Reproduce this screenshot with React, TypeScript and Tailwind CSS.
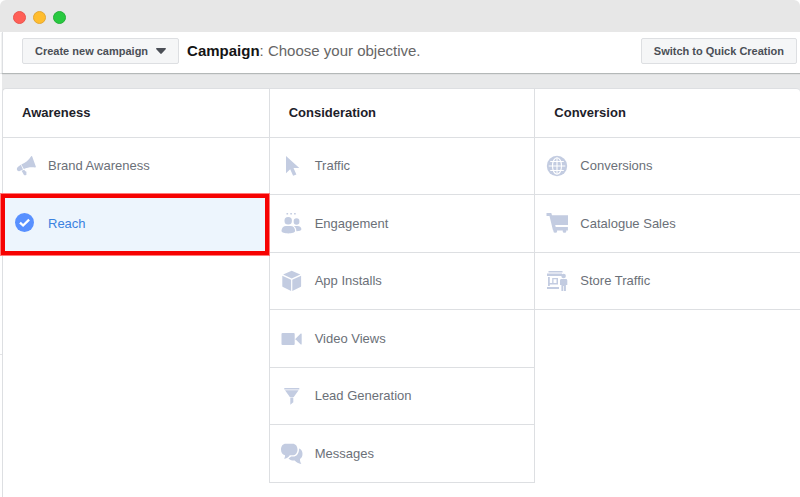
import { useState } from "react";
import type { ReactNode } from "react";

const ICON = "w-[22px] h-[22px] fill-current";

function Megaphone() {
  return (
    <svg viewBox="0 0 22 22" className={ICON}>
      <path d="M17 1.500c.4-.6 1-.5 1.200.1l3.600 9.900c.2.600-.1 1-.8.9-4-.5-7.800 0-11.200 1.600L7.300 9.400C11.600 7.700 14.700 5.200 17 1.500zM6.800 9.700l2.200 4.800-3.300 1.500c-1.200.5-2.200 0-2.600-1-.5-1.200-.1-2.600 1-3.300zM7.600 15.700l2.800-1 .6 1.400 1 .5c.6.3.7.8.3 1.200l.2 1.500c0 .6-.4.9-1 .9h-1c-.4 0-.6-.2-.8-.6z" />
    </svg>
  );
}

function CheckCircle() {
  return (
    <svg viewBox="0 0 22 22" className={ICON}>
      <circle cx="10.500" cy="9.500" r="9.500" />
      <path d="M6 9.600l3.100 2.900 6-5.900" fill="none" stroke="#fff" strokeWidth="2.300" />
    </svg>
  );
}

function Cursor() {
  return (
    <svg viewBox="0 0 22 22" className={ICON}>
      <path d="M5 1v17.300l4.200-4 2.900 6.500 3.300-1.400-2.900-6.300h5.800z" />
    </svg>
  );
}

function People() {
  return (
    <svg viewBox="0 0 22 22" className={ICON}>
      <path d="M5.500 0h1.600v1.400H5.500zM9.300 0h1.600v1.400H9.300zM13.100 0h1.600v1.400h-1.600z" />
      <rect x="3.500" y="4" width="7.400" height="7.600" rx="3.600" />
      <path d="M.5 17.800c0-2.900 2-4.900 4.500-4.900h4.600c2.600 0 4.500 2 4.500 4.900 0 2-3.300 2.600-6.800 2.600S.5 19.800.5 17.800z" />
      <rect x="12.700" y="5.300" width="5.700" height="6.500" rx="2.800" />
      <path d="M12.900 12.900h3.700c2.300 0 3.800 1.500 3.800 3.400 0 1.300-2 2-5 2 0-2.500-.8-4.200-2.500-5.400z" />
    </svg>
  );
}

function Cube() {
  return (
    <svg viewBox="0 0 22 22" className={ICON}>
      <path d="M10.700.8l8.600 3.700-8.600 3.900-8.600-3.900zM1.300 5.700l8.800 4v11.200L2 17c-.5-.2-.7-.6-.7-1.100zM20.100 5.700l-8.800 4v11.200l8.100-3.900c.5-.2.700-.6.700-1.100z" />
    </svg>
  );
}

function Video() {
  return (
    <svg viewBox="0 0 22 22" className={ICON}>
      <rect x=".5" y="5" width="13.200" height="12" rx="1" />
      <path d="M14.500 10.800l5-5.100c.6-.5 1.200-.3 1.200.4v9.800c0 .7-.6.900-1.200.4l-5-5.100z" />
    </svg>
  );
}

function Funnel() {
  return (
    <svg viewBox="0 0 22 22" className={ICON}>
      <path d="M3.300 3h15v1.500h-15zM4 5.300h13.600l-4.800 6.600H8.800z" />
      <path d="M9.300 12.400h3v4.800l-3 2.500z" />
    </svg>
  );
}

function Chat() {
  return (
    <svg viewBox="-.5 0 22 22" className={ICON}>
      <path d="M4.300.8H11c3.100 0 5 2.400 5 5.600 0 3.400-2 5.900-5 5.900H8.300c-1.500 2.100-3.200 3.500-5.700 3.500.8-1.200 1-2.300.9-3.500C.8 11.600-.5 9.600-.5 6.500-.5 3.100 1.300.8 4.300.8z" />
      <path d="M17.600 5.500c2.200.7 3.400 2.600 3.400 5.300 0 2.500-.8 4.300-2.500 5.200-.1 1.900.4 3.500 1.300 5-2.900-.5-5-1.600-6.600-3.500-3 .2-5.100-.7-6.200-2.300 1.100-.4 1.900-.9 2.600-1.600h2c3.400 0 6-2.900 6-8.100z" />
    </svg>
  );
}

function Globe() {
  return (
    <svg viewBox="0 0 22 22" className={ICON}>
      <circle cx="11" cy="11" r="10.200" />
      <g fill="none" stroke="#fff" strokeWidth="1.100">
        <ellipse cx="11" cy="11" rx="4.500" ry="8.300" />
        <path d="M11 2.700v16.600M2.700 11h16.600M4.200 6.500h13.600M4.200 15.500h13.600" />
      </g>
    </svg>
  );
}

function Cart() {
  return (
    <svg viewBox="0 0 22 22" className={ICON}>
      <path d="M.5 0h4.800L6 2.200h16.400v9.900H9.200l.5 1.900h12.200v3.500H7L3.500 3h-3z" />
      <circle cx="9.300" cy="17.900" r="1.900" />
      <circle cx="18.500" cy="17.900" r="1.900" />
    </svg>
  );
}

function Store() {
  return (
    <svg viewBox="0 0 22 22" className={ICON}>
      <path d="M2.500 1h14v1.500h-14zM1 3.500h15v2.500H1z" />
      <path d="M2 7h1.800v9H2zM6.200 8h1.300v5H6.200zM10.500 8H12v5h-1.500zM6.200 8h5v1.200h-5zM2 13h10v1.500H2z" />
      <path d="M1 17h12v2H1z" />
      <circle cx="17.600" cy="6" r="2.300" />
      <path d="M15.500 9h4.300c1 0 1.500.6 1.500 1.500v4.500h-1.400v6H18v-5h-.7v5h-1.900v-6H14v-4.500c0-.9.500-1.500 1.500-1.500z" />
    </svg>
  );
}

type Objective = { name: string; icon: ReactNode };

const COLUMNS: { title: string; items: Objective[] }[] = [
  {
    title: "Awareness",
    items: [
      { name: "Brand Awareness", icon: <Megaphone /> },
      { name: "Reach", icon: <CheckCircle /> },
    ],
  },
  {
    title: "Consideration",
    items: [
      { name: "Traffic", icon: <Cursor /> },
      { name: "Engagement", icon: <People /> },
      { name: "App Installs", icon: <Cube /> },
      { name: "Video Views", icon: <Video /> },
      { name: "Lead Generation", icon: <Funnel /> },
      { name: "Messages", icon: <Chat /> },
    ],
  },
  {
    title: "Conversion",
    items: [
      { name: "Conversions", icon: <Globe /> },
      { name: "Catalogue Sales", icon: <Cart /> },
      { name: "Store Traffic", icon: <Store /> },
    ],
  },
];

export default function App() {
  const [selected, setSelected] = useState("Reach");

  return (
    <div className="min-h-screen flex flex-col bg-white font-['Liberation_Sans',Arial,sans-serif]">
      {/* Window bar */}
      <div className="h-8 shrink-0 flex items-center gap-[7px] px-[13px] pt-[2px] bg-[#e7e7e7] rounded-t-md">
        <span className="w-[13px] h-[13px] rounded-full bg-[#ff5f57] border border-[#e9554e]" />
        <span className="w-[13px] h-[13px] rounded-full bg-[#ffbd2e] border border-[#e3a733]" />
        <span className="w-[13px] h-[13px] rounded-full bg-[#28c940] border border-[#24af38]" />
      </div>

      <div className="flex-1 flex">
        {/* Edge of the side panel */}
        <div className="w-[2px] shrink-0 flex flex-col">
          <div className="h-[42px] border-b border-[#e3e4e6]" />
          <div className="h-[281px] border-b border-[#e3e4e6]" />
        </div>

        <div className="flex-1 min-w-0 flex flex-col bg-[#e8e9ea]">
          <header className="h-[41px] shrink-0 flex items-center bg-white border-l border-[#dddfe2] pl-[19px] pr-[3px] pb-[3px] shadow-[0_1px_1px_#b4b8b8]">
            <button className="h-[26px] flex items-center gap-2 px-3 bg-[#f5f6f7] border border-[#dddfe2] rounded-[2px] text-[11px] font-bold text-[#4b4f56]">
              Create new campaign
              <svg viewBox="0 0 10 6" className="w-[10px] h-[6px] fill-current">
                <path d="M.8 0h8.400c.8 0 1 .7.500 1.200L5.700 5.600c-.4.500-1 .5-1.400 0L.3 1.200C-.2.700 0 0 .8 0z" />
              </svg>
            </button>
            <h1 className="ml-2 text-[15px] leading-5 text-[#666]">
              <b className="text-[#141414]">Campaign</b>: Choose your objective.
            </h1>
            <button className="ml-auto h-[26px] px-3 bg-[#f5f6f7] border border-[#dddfe2] rounded-[2px] text-[11px] font-bold text-[#4b4f56]">
              Switch to Quick Creation
            </button>
          </header>

          <main className="mt-[15px] flex-1 flex bg-white border-l border-t border-[#dddfe2] rounded-t">
            <div className="flex-1 grid grid-cols-3 self-start">
              {COLUMNS.map((col) => (
                <section key={col.title} className="border-l border-[#dddfe2] first:border-l-0">
                  <h2 className="h-[49px] flex items-center pl-[19px] border-b border-[#dddfe2] text-[13px] font-bold text-[#1d2129]">
                    {col.title}
                  </h2>
                  {col.items.map((item) => {
                    const active = item.name === selected;
                    return (
                      <button
                        key={item.name}
                        onClick={() => setSelected(item.name)}
                        className={`relative w-full h-[57px] odd:h-[58px] flex items-center gap-3 pl-[11px] border-b border-[#dddfe2] text-left text-[13px] ${
                          active ? "z-10 bg-[#edf5fd] text-[#3b82e0]" : "text-[#6b7078]"
                        }`}
                      >
                        <span className={active ? "text-[#5890ff]" : "text-[#c3cce1]"}>{item.icon}</span>
                        {item.name}
                        {/* Red highlight round the chosen objective */}
                        {active && (
                          <span className="absolute -top-[1px] -bottom-[3px] -left-[2px] right-0 border-4 border-[#f60202] shadow-[0_0_0_1px_#ff7a7a]" />
                        )}
                      </button>
                    );
                  })}
                </section>
              ))}
            </div>
          </main>
        </div>
      </div>
    </div>
  );
}
